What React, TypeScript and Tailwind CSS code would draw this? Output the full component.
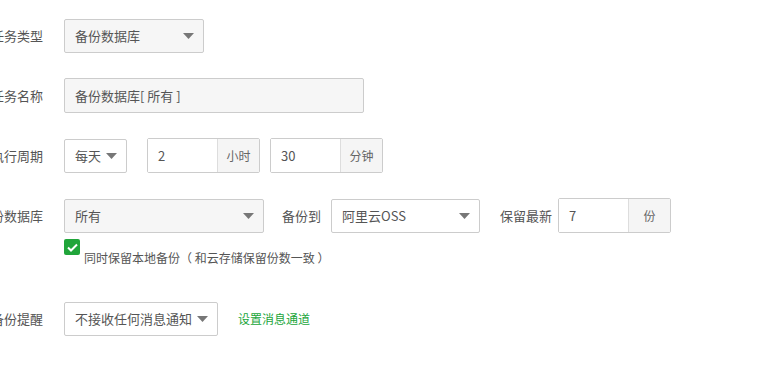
import React from "react";

const Caret = () => (
  <svg width="11" height="6" viewBox="0 0 11 6" className="shrink-0">
    <path d="M0 0 L11 0 L5.5 6 Z" fill="#777" />
  </svg>
);

function Select({ text, w, gray }: { text: string; w: string; gray?: boolean }) {
  return (
    <div
      className={`${w} h-[34px] flex items-center justify-between pl-[10px] pr-[9px] border border-[#ccc] rounded-[2px] text-[13px] text-[#555] ${gray ? "bg-[#f6f6f6]" : "bg-white"}`}
    >
      <span className="whitespace-nowrap">{text}</span>
      <Caret />
    </div>
  );
}

function InputGroup({ value, unit }: { value: string; unit: string }) {
  return (
    <div className="flex h-[35px] border border-[#ccc] rounded-[2px] text-[13px]">
      <div className="w-[69px] flex items-center pl-[10px] text-[#555] bg-white">{value}</div>
      <div className="w-[42px] flex items-center justify-center border-l border-[#ddd] bg-[#f5f5f5] text-[#666] text-[12px]">{unit}</div>
    </div>
  );
}

function Label({ children }: { children: React.ReactNode }) {
  return (
    <div className="w-[100px] shrink-0 text-right mr-[21px] text-[13px] text-[#555] whitespace-nowrap">
      {children}
    </div>
  );
}

export default function App() {
  return (
    <div
      className="w-[763px] h-[368px] overflow-hidden bg-white"
      style={{ fontFamily: '"Noto Sans CJK SC", "Noto Sans", sans-serif' }}
    >
      <div className="ml-[-57px] pt-[19px] flex flex-col">
        <div className="flex items-center h-[34px]">
          <Label>任务类型</Label>
          <Select text="备份数据库" w="w-[140px]" gray />
        </div>
        <div className="flex items-center h-[35px] mt-[25px]">
          <Label>任务名称</Label>
          <div className="w-[300px] h-[35px] flex items-center pl-[10px] border border-[#ccc] rounded-[2px] bg-[#f6f6f6] text-[13px] text-[#555]">
            备份数据库[ 所有 ]
          </div>
        </div>
        <div className="flex items-center h-[35px] mt-[25px]">
          <Label>执行周期</Label>
          <Select text="每天" w="w-[63px]" />
          <div className="ml-[20px]">
            <InputGroup value="2" unit="小时" />
          </div>
          <div className="ml-[10px]">
            <InputGroup value="30" unit="分钟" />
          </div>
        </div>
        <div className="flex items-center h-[35px] mt-[25px]">
          <Label>备份数据库</Label>
          <Select text="所有" w="w-[200px]" gray />
          <div className="ml-[18px] mr-[10px] text-[13px] text-[#555] whitespace-nowrap">备份到</div>
          <Select text="阿里云OSS" w="w-[149px]" />
          <div className="ml-[20px] mr-[6px] text-[13px] text-[#555] whitespace-nowrap">保留最新</div>
          <InputGroup value="7" unit="份" />
        </div>
        <div className="flex items-start ml-[121px] mt-[6px]">
          <div className="w-[16px] h-[16px] rounded-[2px] bg-[#20a53a] flex items-center justify-center shrink-0">
            <svg width="11" height="9" viewBox="0 0 11 9">
              <path d="M1 4.5 L4 7.5 L10 1.5" stroke="white" strokeWidth="2" fill="none" />
            </svg>
          </div>
          <div className="ml-[4px] mt-[11px] text-[12px] leading-[16px] text-[#555] whitespace-nowrap">
            同时保留本地备份（ 和云存储保留份数一致 ）
          </div>
        </div>
        <div className="flex items-center h-[34px] mt-[36px]">
          <Label>备份提醒</Label>
          <Select text="不接收任何消息通知" w="w-[154px]" />
          <div className="ml-[20px] text-[12px] text-[#20a53a] whitespace-nowrap">设置消息通道</div>
        </div>
      </div>
    </div>
  );
}
